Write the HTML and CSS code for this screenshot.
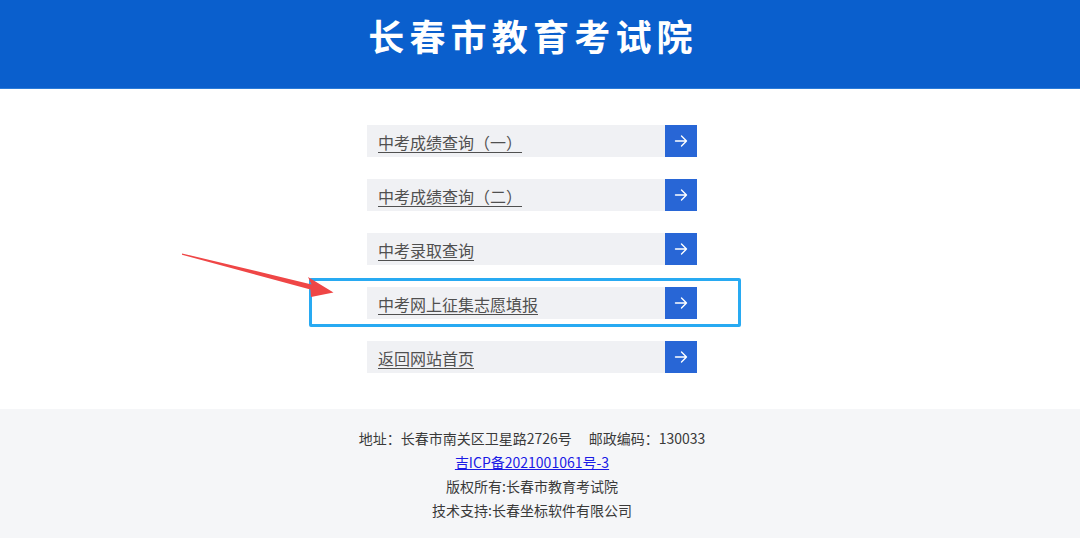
FILE: index.html
```html
<!DOCTYPE html>
<html lang="zh-CN">
<head>
<meta charset="utf-8">
<title>长春市教育考试院</title>
<link rel="stylesheet" href="styles.css">
</head>
<body>
<header class="header">
  <h1 class="title">长春市教育考试院</h1>
</header>
<main class="main">
  <div class="list">
    <a class="row" href="#"><span class="label">中考成绩查询（一）</span><span class="go"><svg viewBox="0 0 14 14" width="14" height="14"><path d="M1.5 7H12.5M7.5 2L12.5 7L7.5 12" fill="none" stroke="#fff" stroke-width="1.4" stroke-linecap="round" stroke-linejoin="round"/></svg></span></a>
    <a class="row" href="#"><span class="label">中考成绩查询（二）</span><span class="go"><svg viewBox="0 0 14 14" width="14" height="14"><path d="M1.5 7H12.5M7.5 2L12.5 7L7.5 12" fill="none" stroke="#fff" stroke-width="1.4" stroke-linecap="round" stroke-linejoin="round"/></svg></span></a>
    <a class="row" href="#"><span class="label">中考录取查询</span><span class="go"><svg viewBox="0 0 14 14" width="14" height="14"><path d="M1.5 7H12.5M7.5 2L12.5 7L7.5 12" fill="none" stroke="#fff" stroke-width="1.4" stroke-linecap="round" stroke-linejoin="round"/></svg></span></a>
    <div class="marked">
      <a class="row" href="#"><span class="label">中考网上征集志愿填报</span><span class="go"><svg viewBox="0 0 14 14" width="14" height="14"><path d="M1.5 7H12.5M7.5 2L12.5 7L7.5 12" fill="none" stroke="#fff" stroke-width="1.4" stroke-linecap="round" stroke-linejoin="round"/></svg></span></a>
      <svg class="pointer" viewBox="175 245 165 60" width="165" height="60"><polygon points="182,254.4 311.6,285.4 308,278 333.5,293.5 311,298 310.4,290.6 182,255.8" fill="#ef4646"/></svg>
    </div>
    <a class="row" href="#"><span class="label">返回网站首页</span><span class="go"><svg viewBox="0 0 14 14" width="14" height="14"><path d="M1.5 7H12.5M7.5 2L12.5 7L7.5 12" fill="none" stroke="#fff" stroke-width="1.4" stroke-linecap="round" stroke-linejoin="round"/></svg></span></a>
  </div>
</main>
<footer class="footer">
  <div class="line">地址：长春市南关区卫星路2726号<span class="gap">邮政编码：130033</span></div>
  <div class="line"><a class="icp" href="#">吉ICP备2021001061号-3</a></div>
  <div class="line">版权所有:长春市教育考试院</div>
  <div class="line">技术支持:长春坐标软件有限公司</div>
</footer>
</body>
</html>
```
FILE: styles.css
```css
html, body {
  margin: 0;
  padding: 0;
  background: #ffffff;
  font-family: "Noto Sans CJK SC", "Noto Sans", sans-serif;
}

.header {
  height: 89px;
  background: #0a5fcd;
  box-sizing: border-box;
  padding: 10px 16px 0 0;
  text-align: center;
  border-bottom: 1px solid #2b7bd8;
}

.title {
  margin: 0;
  color: #ffffff;
  font-size: 36px;
  font-weight: 700;
  line-height: 50px;
  letter-spacing: 5.2px;
  padding-left: 2px;
}

.main {
  padding: 36px 16px 36px 0;
}

.list {
  width: 330px;
  margin: 0 auto;
  display: flex;
  flex-direction: column;
  gap: 22px;
}

.row {
  display: flex;
  align-items: center;
  height: 32px;
  background: #f0f1f4;
  text-decoration: none;
}

.label {
  flex: 1;
  padding-left: 11px;
  font-size: 16px;
  line-height: 32px;
  color: #505050;
  text-decoration: underline;
  text-underline-offset: 3px;
  padding-top: 2px;
}

.go {
  width: 32px;
  height: 32px;
  background: #2866d6;
  display: flex;
  align-items: center;
  justify-content: center;
}

.marked {
  position: relative;
}

.marked::before {
  content: "";
  position: absolute;
  left: -58px;
  right: -44px;
  top: -9px;
  bottom: -8px;
  border: 3px solid #28aaf2;
  border-radius: 2px;
  pointer-events: none;
}

.pointer {
  position: absolute;
  left: -192px;
  top: -43px;
}

.footer {
  background: #f5f6f8;
  padding: 17px 16px 16px 0;
  text-align: center;
  font-size: 14px;
  line-height: 24px;
  color: #3a3a3a;
}

.gap {
  margin-left: 17px;
}

.icp {
  color: #1a1ae6;
  text-decoration: underline;
}
```
